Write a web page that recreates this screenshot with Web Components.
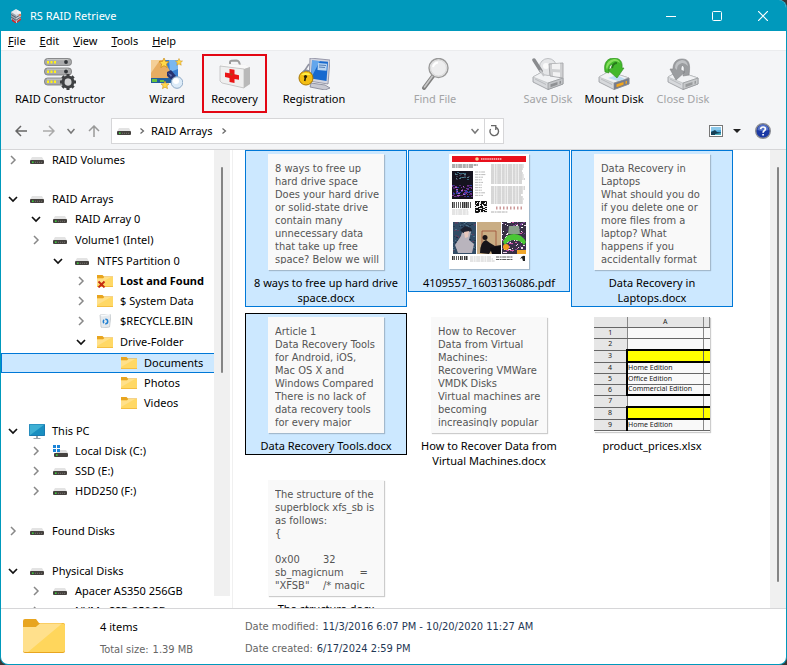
<!DOCTYPE html>
<html lang="en">
<head>
<meta charset="utf-8">
<title>RS RAID Retrieve</title>
<style>
  html, body { height: 100%; margin: 0; }
  body { background: #3a3634; font: 11px/16px "Noto Sans", "Open Sans", sans-serif; color: #000; }
</style>
</head>
<body>
<rs-window>
  <rs-titlebar slot="title">RS RAID Retrieve</rs-titlebar>
  <rs-menubar slot="menu" items="File,Edit,View,Tools,Help"></rs-menubar>
  <rs-toolbar slot="tools">
    <rs-tool icon="server" style="--w:104px">RAID Constructor</rs-tool>
    <rs-tool icon="wizard" style="--w:70px;--lead:20px">Wizard</rs-tool>
    <rs-tool icon="aid" style="--w:65px" marked>Recovery</rs-tool>
    <rs-tool icon="register" style="--w:94px">Registration</rs-tool>
    <rs-tool icon="find" style="--w:60px;--lead:44px" disabled>Find File</rs-tool>
    <rs-tool icon="save" style="--w:66px;--lead:50px" disabled>Save Disk</rs-tool>
    <rs-tool icon="mount" style="--w:66px">Mount Disk</rs-tool>
    <rs-tool icon="close" style="--w:72px" disabled>Close Disk</rs-tool>
  </rs-toolbar>
  <rs-addressbar slot="tools">RAID Arrays</rs-addressbar>

  <rs-tree slot="side">
    <rs-node level="0" icon="drive" state="closed">RAID Volumes</rs-node>
    <rs-node level="0" icon="drive" state="open" style="--lead:19px">RAID Arrays</rs-node>
    <rs-node level="1" icon="drive" state="open">RAID Array 0</rs-node>
    <rs-node level="1" icon="drive" state="closed" tall>Volume1 (Intel)</rs-node>
    <rs-node level="2" icon="drive" state="open">NTFS Partition 0</rs-node>
    <rs-node level="3" icon="lost" state="closed" bold>Lost and Found</rs-node>
    <rs-node level="3" icon="folder" state="closed">$ System Data</rs-node>
    <rs-node level="3" icon="bin" state="closed">$RECYCLE.BIN</rs-node>
    <rs-node level="3" icon="folder" state="open" tall>Drive-Folder</rs-node>
    <rs-node level="4" icon="folder" selected>Documents</rs-node>
    <rs-node level="4" icon="folder">Photos</rs-node>
    <rs-node level="4" icon="folder">Videos</rs-node>
    <rs-node level="0" icon="pc" state="open" style="--lead:8px">This PC</rs-node>
    <rs-node level="1" icon="system" state="closed">Local Disk (C:)</rs-node>
    <rs-node level="1" icon="drive" state="closed">SSD (E:)</rs-node>
    <rs-node level="1" icon="drive" state="closed">HDD250 (F:)</rs-node>
    <rs-node level="0" icon="drive" state="closed" style="--lead:20px">Found Disks</rs-node>
    <rs-node level="0" icon="drive" state="open" style="--lead:20px">Physical Disks</rs-node>
    <rs-node level="1" icon="drive" state="closed">Apacer AS350 256GB</rs-node>
    <rs-node level="1" icon="drive" state="closed">NVMe SSD 250GB</rs-node>
  </rs-tree>

  <rs-files slot="main">
    <rs-file selected name="8 ways to free up hard drive space.docx"><rs-page>8 ways to free up
hard drive space
Does your hard drive
or solid-state drive
contain many
unnecessary data
that take up free
space? Below we will</rs-page></rs-file>
    <rs-file selected name="4109557_1603136086.pdf"><rs-pdf></rs-pdf></rs-file>
    <rs-file selected name="Data Recovery in Laptops.docx"><rs-page>Data Recovery in
Laptops
What should you do
if you delete one or
more files from a
laptop? What
happens if you
accidentally format</rs-page></rs-file>
    <rs-file selected focused name="Data Recovery Tools.docx"><rs-page>Article 1
Data Recovery Tools
for Android, iOS,
Mac OS X and
Windows Compared
There is no lack of
data recovery tools
for every major</rs-page></rs-file>
    <rs-file name="How to Recover Data from Virtual Machines.docx"><rs-page>How to Recover
Data from Virtual
Machines:
Recovering VMWare
VMDK Disks
Virtual machines are
becoming
increasingly popular</rs-page></rs-file>
    <rs-file name="product_prices.xlsx"><rs-sheet></rs-sheet></rs-file>
    <rs-file name="The structure.docx"><rs-page>The structure of the
superblock xfs_sb is
as follows:
{

0x00	32
sb_magicnum     =
"XFSB"	/* magic</rs-page></rs-file>
  </rs-files>
  <rs-status slot="status"></rs-status>
</rs-window>

<script>
const FOLDER = '<path d="M0 1h5.5l1.5 1.6H16V13H0z" fill="#e8a51f"/><path d="M0 4.6h6L7.5 3H16v9.6H0z" fill="#ffd865"/><path d="M0 4.6h6L7.5 3H14L0 11z" fill="#ffe08a"/>';
const DRIVE = '<path d="M2 0h10l2 3.5H0z" fill="#e3e3e3"/><rect y="3" width="14" height="4" rx="1" fill="#44413e"/><rect x="2" y="4.5" width="1.6" height="1.4" fill="#3ce03c"/><path d="M5 5.3h7" stroke="#77736e" stroke-dasharray="1 1"/>';
const disk = (side, led) => `
  <path d="M1 19 11 13.500 31 20v6L16 31.500 1 24z" fill="#d7d9dc" stroke="#96989d" stroke-width=".8"/>
  <path d="M1 19 11 13.500 31 20 16 25z" fill="#f1f2f4" stroke="#b6b8bb" stroke-width=".6"/>
  <path d="M16 25 31 20v6l-15 5.500z" fill="${side}" stroke="#8c8e92" stroke-width=".6"/>
  <path d="m18.500 26.300 7-2.200v2.700l-7 2.400zM27.500 23.300l1.500-.5v2.800l-1.500.5z" fill="${led}"/>
  <path d="m3 21 11 5.500" stroke="#b9bbbf"/>`;
const STAR = (x, y, s) => `<path transform="translate(${x} ${y}) scale(${s})" d="M0-5 1.500-1.600 5-1.400 2.400 1 3.200 4.600 0 2.700-3.200 4.600-2.400 1-5-1.400-1.500-1.600z" fill="#ffd84a" stroke="#c98a12" stroke-width=".7"/>`;
const bar = y => `<rect x=".5" y="${y}" width="27" height="7" rx="3" fill="#a9aaab" stroke="#77797a" stroke-width=".8"/><path d="M3 ${y + 1.200}h21" stroke="#c9cacb"/><path d="M3 ${y + 3.700}h10" stroke="#fff21a" stroke-width="2.600" stroke-dasharray="2 1.500"/><circle cx="22" cy="${y + 3.500}" r="1.900" fill="#303438"/>`;

const ICONS = {
  logo: [14, 14, '<path d="M2 3 7 0l5 3v7l-5 4-5-4z" fill="#e6eaee"/><path d="M2 3 7 6v8l-5-4z" fill="#9aa6b1"/><path d="m7 6 5-3v7l-5 4z" fill="#c5ccd4"/><path d="M2 5.500 7 8.500l5-3M2 8l5 3.200L12 8" stroke="#59636e" fill="none"/><path d="m3 10 4 3v1.500L3 12z" fill="#d81f26"/><path d="m8 1 4 2v3L8 4z" fill="#f0f3f6"/><circle cx="11" cy="6" r="1.300" fill="#dc7d5c"/><path d="m8 12 4-3v2l-4 3z" fill="#c93431"/>'],
  min: [10, 10, '<path d="M0 5.500h10" stroke="#fff"/>'],
  max: [10, 10, '<rect x=".5" y=".5" width="9" height="9" rx="1" fill="none" stroke="#fff"/>'],
  x: [10, 10, '<path d="m0 0 10 10M10 0 0 10" stroke="#fff" stroke-width="1.200"/>'],
  server: [32, 32, bar(.5) + bar(10) + bar(20) +
    '<g transform="translate(24 24)"><circle r="5" fill="none" stroke="#3f4143" stroke-width="3"/><path d="M0-8v3M0 8V5M-8 0h3M8 0H5M-5.600-5.600l2 2M5.600 5.600l-2-2M-5.600 5.600l2-2M5.600-5.600l-2 2" stroke="#3f4143" stroke-width="3"/><circle r="3.400" fill="#d4d5d6"/></g>'],
  wizard: [32, 32, '<path d="M0 2h13l7 9v13H0z" fill="#e8ad62"/><path d="M0 2h9L0 15z" fill="#f4cf98"/><path d="M13 2h14v19l-6 5-4-5 2-8z" fill="#3a7fd0"/><path d="M18 2h9v9l-8 3z" fill="#79b7ef"/><path d="M0 20h21v5H0z" fill="#215f9d"/><path d="M1 21h5v3H1zM9 22h4v2H9z" fill="#69c43e"/><path d="m16 14 4-2 5 6-4 4-5-4z" fill="#26316f"/><path d="m17 15 4 2-1 2z" fill="#6574b4"/><circle cx="26" cy="24.500" r="5.800" fill="#dcebf8" stroke="#8faac6"/><circle cx="25" cy="23" r="3" fill="#fff"/>' + STAR(13, 5, 1) + STAR(28, 4, .7) + STAR(14, 27, .8)],
  aid: [32, 32, '<path d="M11 6V4q0-1 1.500-1.200l5-.3Q19 2.500 20 4l1 3" fill="none" stroke="#9c9c9c" stroke-width="2"/><path d="m1 8 3-2 23 1 4 2v17l-6 4-20-5-4-2z" fill="#dedede"/><path d="m1 8 3-2 23 1 4 2-6 2z" fill="#f9f9f9"/><path d="m1 8 24 3v19L3 25 1 23z" fill="#efefef" stroke="#b8b8b8" stroke-width=".7"/><path d="m25 11 6-2v17l-6 4z" fill="#b9b9b9"/><path d="m10.500 11 5 .8v4.400l4.500 1v4.600l-4.500-.9V25l-5-1v-4L6 19v-4.500l4.500.7z" fill="#ea1515"/><path d="m11 15 3 1-2 2z" fill="#a84518"/>'],
  register: [32, 32, '<path d="m13 25 14 2 5 3-5 2-15-3z" fill="#c8c9d2" stroke="#7e8092" stroke-width=".8"/><path d="m12 0 20 2-2 24-19-3z" fill="#d3d5df" stroke="#85879a" stroke-width=".8"/><path d="m14 2.500 16 1.300L28.500 23 13 20.500z" fill="#1769cf"/><path d="m14 2.500 8 .6-8 15z" fill="#63a6ec"/><path d="m20 5 9 .7-.5 7-9-.8z" fill="#b9d5f1"/><path d="m21 7 7 .5M21 9l6 .5" stroke="#557fb8"/><path d="m11 6-6 9" stroke="#8f92a1" stroke-width="1.500"/><circle cx="8" cy="20" r="7" fill="#f4be12" stroke="#a67604"/><path d="M3 17a6 5 0 0 1 10 0z" fill="#ffee45"/><path d="M5 14q2-3 6-1" fill="none" stroke="#868995" stroke-width="1.500"/><circle cx="7.500" cy="18.500" r="1.600" fill="#292209"/><path d="m7.500 19-.8 4" stroke="#292209" stroke-width="1.600"/>'],
  find: [32, 32, '<path d="m14 18-9 12" stroke="#818181" stroke-width="4" stroke-linecap="round"/><path d="m13.500 18-8 11" stroke="#c9c9c9" stroke-width="1.600" stroke-linecap="round"/><circle cx="19.500" cy="10" r="9.500" fill="#ededee" stroke="#999" stroke-width="1.400"/><circle cx="19.500" cy="10" r="8" fill="none" stroke="#d8d8d8"/><path d="M14 9q1-4 5-4.500" stroke="#fff" stroke-width="2" fill="none"/>'],
  save: [32, 32, disk('#c3c5c8', '#8f9194') + '<circle cx="16" cy="9" r="8.500" fill="#e5e6e8" stroke="#bdbfc2"/><circle cx="14" cy="8" r="3" fill="#fafafa"/><path d="m2 2 7 11" stroke="#898b8e" stroke-width="3.500" stroke-linecap="round"/><path d="m8 12 4 6" stroke="#c4c5c8" stroke-width="2"/><path d="m17 6 14-1v15l-13-2z" fill="#cfd0d2" stroke="#aaabae"/><path d="m20 6 8-.5v6l-8-.5zM21 14l7 .5V19l-7-1z" fill="#f2f2f3"/>'],
  mount: [32, 32, disk('#777c8c', '#f2a51c') + '<path d="m10 20 10 3 7-2-8-4z" fill="#bddcf4"/><path d="M7 14C5 4 10 0 16 0s9 4 8 10h2l-7 10-9-8 4-2c1-3 0-4-1-3-2 1-2 5-2 8z" fill="#43b82c" stroke="#2f8c1e" stroke-width=".6"/><path d="M8 9q1-7 8-8 5 0 6 4-5-4-9 0-3 2-4 7z" fill="#86df5d"/><path d="M14 10q1-5 5-5" stroke="#267b1a" fill="none" stroke-width="2"/>'],
  close: [32, 32, disk('#c6c8ca', '#999b9d') + '<path d="M22 17C24 4 21 1 15 1S6 5 6 11H3l6 11 9-8-4-2c0-4 1-5 2-4 2 1 1 6 0 10z" fill="#9b9da0" stroke="#838588" stroke-width=".6"/><path d="M8 10q0-7 7-8 5 0 6 6-5-5-8-2-3 1-3 6z" fill="#bfc1c4"/>'],
  back: [12, 12, '<path d="M12 6H1M6 1 1 6l5 5" fill="none" stroke="#666" stroke-width="1.500"/>'],
  fwd: [12, 12, '<path d="M0 6h11M6 1l5 5-5 5" fill="none" stroke="#aaa" stroke-width="1.500"/>'],
  up: [12, 12, '<path d="M6 12V1M1 6l5-5 5 5" fill="none" stroke="#999" stroke-width="1.500"/>'],
  down: [8, 8, '<path d="m.5 2 3.500 4 3.500-4" fill="none" stroke="#777" stroke-width="1.500"/>'],
  next: [8, 8, '<path d="m2.500 1.500 3 2.500-3 2.500" fill="none" stroke="#666" stroke-width="1.200"/>'],
  reload: [12, 14, '<path d="M7.800 3.300A4.300 4.300 0 1 1 2.600 5" fill="none" stroke="#666" stroke-width="1.400"/><path d="M3 1.700h4.800V6" fill="none" stroke="#666" stroke-width="1.300"/>'],
  photo: [14, 12, '<rect x=".5" y=".5" width="13" height="11" fill="#fff" stroke="#777"/><rect x="2" y="2" width="10" height="8" fill="#4aa6d8"/><path d="M2 2h10v3L2 6z" fill="#8bc8ea"/><path d="m2 7 4-2 2 2 4 .5V10H2z" fill="#153f56"/><path d="m6 9 6-1v2H6z" fill="#4bb0c0"/>'],
  caret: [8, 4, '<path d="M0 0h8L4 4z" fill="#222"/>'],
  help: [16, 16, '<circle cx="8" cy="8" r="7.300" fill="#1c3aa5" stroke="#8a8c92" stroke-width="1.400"/><path d="M2.500 7a5.500 5.500 0 0 1 11 0q-5 2-11 0z" fill="#5572c8"/><path d="M5.600 6.200Q5.800 4 8.100 4t2.300 2c0 1.600-2.300 1.700-2.300 3.700M8.100 11v1.600" stroke="#fff" stroke-width="1.700" fill="none"/>'],
  drive: [14, 7, DRIVE],
  folder: [16, 14, FOLDER],
  lost: [16, 14, FOLDER + '<path d="m1.500 7.500 6 6m0-6-6 6" stroke="#c42b12" stroke-width="1.800"/>'],
  bin: [12, 14, '<path d="M1 1 10 0l2 1-1.500 12-7 1L2 13z" fill="#e4e9ed" stroke="#b7bdc2" stroke-width=".7"/><path d="M1 1 10 0l2 1-9 1.500z" fill="#f8fafb"/><circle cx="6.500" cy="7.500" r="2.200" fill="none" stroke="#1f7fd1" stroke-width="1.500" stroke-dasharray="3.400 1.200"/>'],
  pc: [16, 15, '<rect width="16" height="12" rx=".8" fill="#1c6fa8"/><path d="M.6.6h14.800v10.800H.6z" fill="#1a8fc0"/><path d="M.6.6h14.800L.6 11.400z" fill="#3fb0d4"/><path d="M7 12h2v2h2.500v1h-7v-1H7z" fill="#9aa3aa"/>'],
  system: [15, 12, '<path d="M0 0h3v3H0zM4 0h3v3H4zM0 4h3v3H0zM4 4h3v3H4z" fill="#1b84d8"/><path d="M7 5h6l2 3H3l1-1h3z" fill="#dedede"/><rect x="1" y="8" width="14" height="4" rx="1" fill="#44413e"/><path d="M3 10h1.600" stroke="#3ce03c" stroke-width="1.400"/>'],
  open: [10, 8, '<path d="m1 2 4 4 4-4" fill="none" stroke="#111" stroke-width="1.700"/>'],
  closed: [8, 10, '<path d="m2 1 4 4-4 4" fill="none" stroke="#888" stroke-width="1.500"/>'],
  bigfolder: [42, 34, '<path d="M0 2q0-2 2-2h11l3 4h24q2 0 2 2v26q0 2-2 2H2q-2 0-2-2z" fill="#e8a51f"/><path d="M0 8h13l4-3.500h23q2 0 2 2v24.500q0 2-2 2H2q-2 0-2-2z" fill="#ffd65c"/><path d="M0 8h13l4-3.500h22L5 33H2q-2 0-2-2z" fill="#ffe08c"/>'],
};

const BUTTON = 'button{font:inherit;color:inherit;background:none;border:0;margin:0;padding:0;text-align:inherit;outline:0}';

class RsElement extends HTMLElement {
  connectedCallback() {
    if (this.shadowRoot) return;
    const t = document.createElement('template');
    t.innerHTML = `<style>*{box-sizing:border-box}${this.css()}</style>${this.html()}`;
    this.attachShadow({ mode: 'open' }).append(t.content.cloneNode(true));
  }
  css() { return ':host{display:block}'; }
  html() { return '<slot></slot>'; }
}
const define = (name, css, html = '<slot></slot>') => customElements.define(name, class extends RsElement {
  css() { return css; }
  html() { return typeof html === 'function' ? html(this) : html; }
});

define('rs-icon', ':host{display:block;flex:none}svg{display:block}', el => {
  const [w, h, body] = ICONS[el.getAttribute('name')];
  return `<svg width="${w}" height="${h}" viewBox="0 0 ${w} ${h}" aria-hidden="true">${body}</svg>`;
});

define('rs-window', `
  :host{display:flex;flex-direction:column;height:100vh;box-sizing:border-box;border:solid #0099bc;border-width:0 1px 1px;border-radius:0 8px 8px 8px;overflow:hidden;background:#fff}
  header{flex:none;display:block}
  .tools{background:#f4f5f7;border-top:1px solid #ebecee;border-bottom:1px solid #d6d6d8;padding:3px 7px 5px}
  .body{flex:1;min-height:0;display:grid;grid-template-columns:231px minmax(0,1fr)}
  .body>*{min-width:0;min-height:0;overflow:hidden}
  main{border-left:1px solid #f0f0f0}
  aside{display:flex}main{display:flex}
  ::slotted([slot=side]),::slotted([slot=main]){flex:1;min-width:0}
  footer{flex:none;border-top:1px solid #d6d6d8}`,
  `<header><slot name="title"></slot><slot name="menu"></slot></header>
   <div class="tools"><slot name="tools"></slot></div>
   <div class="body"><aside><slot name="side"></slot></aside><main><slot name="main"></slot></main></div>
   <footer><slot name="status"></slot></footer>`);

define('rs-titlebar', BUTTON + `
  :host{display:flex;align-items:center;height:31px;background:#0099bc;color:#fff;padding-left:8px}
  h1{font:inherit;margin:0 auto 0 7px}
  button{width:46px;height:31px;display:grid;place-items:center}`,
  `<rs-icon name="logo"></rs-icon><h1><slot></slot></h1>
   <button aria-label="Minimize"><rs-icon name="min"></rs-icon></button>
   <button aria-label="Maximize"><rs-icon name="max"></rs-icon></button>
   <button aria-label="Close"><rs-icon name="x"></rs-icon></button>`);

define('rs-menubar', BUTTON + `
  :host{display:block}nav{display:flex;gap:14px;height:19px;align-items:center;padding:0 7px;background:#fff}`,
  el => `<nav>${el.getAttribute('items').split(',').map(s => `<button><u>${s[0]}</u>${s.slice(1)}</button>`).join('')}</nav>`);

define('rs-toolbar', ':host{display:flex;margin-bottom:5px}');

define('rs-tool', BUTTON + `
  :host{display:block;flex:none;width:var(--w);margin-left:var(--lead,0)}
  button{width:100%;height:59px;border:2px solid transparent;padding:2px 0;display:flex;flex-direction:column;align-items:center;gap:1px;white-space:nowrap}
  :host([marked]) button{border-color:#e30613}
  button:disabled{color:#a3a4a6}`,
  el => `<button ${el.hasAttribute('disabled') ? 'disabled' : ''}><rs-icon name="${el.getAttribute('icon')}"></rs-icon><span><slot></slot></span></button>`);

define('rs-addressbar', BUTTON + `
  :host{display:flex;align-items:center;height:26px}
  button{flex:none;display:grid;place-items:center}
  .go{width:30px;height:26px}.back{width:26px}.small{width:14px}.up{width:31px}
  .box{flex:0 1 393px;display:flex;align-items:center;height:26px;border:1px solid #d6d6d8;background:#fff;margin-left:2px}
  .box>rs-icon{margin:0 5px}
  .box>rs-icon+rs-icon{margin:0 2px}
  .crumb{margin:0 3px}
  .list{margin-left:auto;width:19px;height:24px}
  .reload{width:19px;height:24px;border-left:1px solid #d6d6d8}
  .view{margin-left:auto}.view,.help{height:24px}
  .caret{width:28px;height:24px}
  .help{margin:0 8px 0 4px}`,
  `<button class="go back" aria-label="Back"><rs-icon name="back"></rs-icon></button>
   <button class="go" aria-label="Forward"><rs-icon name="fwd"></rs-icon></button>
   <button class="small" aria-label="Recent"><rs-icon name="down"></rs-icon></button>
   <button class="up" aria-label="Up"><rs-icon name="up"></rs-icon></button>
   <div class="box"><rs-icon name="drive"></rs-icon><rs-icon name="next"></rs-icon><button class="crumb"><slot></slot></button><rs-icon name="next"></rs-icon>
     <button class="list" aria-label="History"><rs-icon name="down"></rs-icon></button>
     <button class="reload" aria-label="Refresh"><rs-icon name="reload"></rs-icon></button></div>
   <button class="view" aria-label="View"><rs-icon name="photo"></rs-icon></button>
   <button class="caret" aria-label="View options"><rs-icon name="caret"></rs-icon></button>
   <button class="help" aria-label="Help"><rs-icon name="help"></rs-icon></button>`);

define('rs-scroll', `
  :host{display:flex;flex:none;width:16px;background:#f0f0f0;justify-content:center;align-items:flex-start;padding-top:17px;box-sizing:border-box}
  i{width:2px;background:#858585;height:var(--thumb);border-radius:1px}`, '<i></i>');

define('rs-tree', `
  :host{display:flex;overflow:hidden}
  .list{flex:1;min-width:0;height:100%;overflow:hidden}
  rs-scroll{margin:0 2px 12px 0;--thumb:48%}`,
  '<div class="list" role="tree"><slot></slot></div><rs-scroll></rs-scroll>');

define('rs-node', BUTTON + `
  :host{display:block;margin-top:var(--lead,0)}
  :host([level="1"]){--in:23px}:host([level="2"]){--in:45px}:host([level="3"]){--in:68px}:host([level="4"]){--in:92px}
  button{width:100%;height:20px;display:flex;align-items:center;padding-left:var(--in,0);border:1px solid transparent;white-space:nowrap}
  :host([tall]) button{height:22px}
  :host([bold]) button{font-weight:bold}
  :host([selected]) button{background:#cce8ff;border-color:#0078d7;border-right:0}
  .tw{width:26px;padding-right:4px;flex:none;display:grid;place-items:center}
  .ic{width:18px;margin-right:6px;flex:none;display:grid;place-items:center}`,
  el => `<button role="treeitem"><span class="tw">${el.hasAttribute('state') ? `<rs-icon name="${el.getAttribute('state')}"></rs-icon>` : ''}</span><span class="ic"><rs-icon name="${el.getAttribute('icon')}"></rs-icon></span><span><slot></slot></span></button>`);

define('rs-files', `
  :host{display:flex;overflow:hidden}
  .grid{flex:1;min-width:0;display:grid;grid-template-columns:repeat(auto-fill,162px);grid-auto-rows:157px;gap:6px 1px;align-items:start;align-content:start;padding-left:12px;overflow:hidden}
  rs-scroll{--thumb:94%}`,
  '<div class="grid"><slot></slot></div><rs-scroll></rs-scroll>');

define('rs-file', BUTTON + `
  :host{display:block}
  button{width:100%;display:flex;flex-direction:column;align-items:center;gap:5px;border:1px solid transparent;padding:3px 4px 1px}
  :host([selected]) button{background:#cce8ff;border-color:#0078d7}
  :host([focused]) button{border-color:#000}
  .thumb{height:116px}
  .name{line-height:15px;text-align:center;overflow-wrap:anywhere}`,
  el => `<button><span class="thumb"><slot></slot></span><span class="name">${el.getAttribute('name')}</span></button>`);

define('rs-page', `
  :host{display:block;box-sizing:border-box;width:116px;height:116px;background:#f9f9f9;box-shadow:1px 1px 1px #0003;padding:8px 0 0 7px}
  div{height:102px;overflow:hidden;font:11px/13px "DejaVu Sans Condensed","DejaVu Sans",sans-serif;color:#555;white-space:pre;tab-size:48px}`,
  '<div><slot></slot></div>');

const rnd = (() => { let s = 7; return () => (s = (s * 16807) % 2147483647) / 2147483647; })();
const lines = (x, y, w, n, step, c = '#999') => Array.from({ length: n }, (_, i) =>
  `<path d="M${x} ${y + i * step}h${w - Math.round(rnd() * 5)}" stroke="${c}" stroke-width=".8" stroke-dasharray="3 .6 2 .6 4 .6"/>`).join('');
const specks = (x, y, w, h, n, cs) => Array.from({ length: n }, () =>
  `<rect x="${x + Math.floor(rnd() * (w - 1))}" y="${y + Math.floor(rnd() * (h - 1))}" width="${1 + Math.round(rnd())}" height="1" fill="${cs[Math.floor(rnd() * cs.length)]}"/>`).join('');
const barcode = (x, y, w, h) => Array.from({ length: Math.floor(w / 2) }, (_, i) =>
  `<rect x="${x + i * 2}" y="${y}" width="${rnd() > .5 ? 1.500 : .8}" height="${h}" fill="#333"/>`).join('');

define('rs-pdf', ':host{display:block;width:80px;height:115px;background:#fff;box-shadow:1px 1px 1px #0003}svg{display:block}', () => `
  <svg width="80" height="115" viewBox="0 0 80 115" aria-hidden="true">
    <rect x="3" y="2" width="74" height="6" fill="#e8101c"/><circle cx="28" cy="5" r="1.800" fill="#f3d79a"/><path d="M32 5h21" stroke="#f9c6c8" stroke-width="1.500" stroke-dasharray="1.500 .6"/>
    ${lines(3, 11, 26, 2, 2, '#333')}
    <rect x="3" y="17" width="21" height="28" fill="#15131f"/>${specks(6, 18, 15, 9, 28, ['#34637a', '#5b7d86', '#3a3549'])}${specks(3, 31, 21, 13, 90, ['#71318c', '#2b3fa8', '#b263c9', '#4a2270'])}
    ${lines(26, 18, 11, 10, 2.600, '#aaa')}
    ${lines(42, 11, 35, 10, 2)}${lines(42, 33, 35, 9, 2)}
    <path d="M47 54h26" stroke="#c99" stroke-width="3" stroke-dasharray="1.500 2"/>${lines(42, 58, 20, 1, 2)}
    ${barcode(3, 48, 21, 6)}${lines(3, 56, 18, 3, 2, '#bbb')}
    <rect x="26" y="47" width="12" height="12" fill="#eee"/>${specks(26, 47, 12, 12, 75, ['#111'])}<path d="M26.500 47.500h3v3h-3zM34.500 47.500h3v3h-3zM26.500 55.500h3v3h-3z" fill="none" stroke="#111"/>
    <rect x="4" y="68" width="23" height="32" fill="#324c66"/>${specks(4, 68, 23, 32, 100, ['#1d2f46', '#4d6f86', '#5b3f5f', '#243b50'])}<path d="M12 82q1-7 7-8l3 4-2 8 5 4-2 9H9l-3-8z" fill="#b9b4bd"/><path d="m11 76 5-4 6 2 1 3-9 2z" fill="#1d2231"/><path d="m15 78 5-1-1 6-3 1z" fill="#e8c8bd"/>
    <rect x="28" y="68" width="24" height="32" fill="#c9ad84"/><path d="M33 77h14v17H33z" fill="none" stroke="#a04b35" stroke-width=".8"/><path d="M31 99q0-11 6-13l4 3 5 3 6-1v2l-9 2-3 5z" fill="#171419"/><circle cx="36" cy="83.500" r="2.500" fill="#1a1417"/><path d="m41 94 11-2v8h-9z" fill="#0e0d12"/>
    <rect x="53" y="68" width="24" height="32" fill="#383045"/>${specks(53, 68, 24, 32, 150, ['#d65ea8', '#f1d8ea', '#7e4899', '#ffffff', '#4a2e65'])}<path d="M54 88q3-8 11-8t12 8l-2 3q-4-5-10-5t-9 5z" fill="#4ac735"/><path d="M60 72h10l1 8H59z" fill="#8aa08a"/><circle cx="57" cy="93" r="3" fill="#f29c1f"/><rect x="68" y="96" width="9" height="4" fill="#f0a62a"/>
    ${barcode(3, 102, 16, 4)}${lines(21, 103, 25, 3, 2, '#bbb')}${lines(47, 103, 21, 2, 2.500, '#333')}<path d="M71 105q2-4 5-3v5h-2l-1-3z" fill="#222"/>
  </svg>`);

const cells = [['', ''], ['', ''], ['', 'y'], ['Home Edition', 'b'], ['Office Edition', 'b'], ['Commercial Edition', 'b e'], ['', ''], ['', 'y'], ['Home Edition', 'b']];
define('rs-sheet', `
  :host{display:block;width:116px;height:115px;overflow:hidden;background:#f9f9f9;box-shadow:1px 1px 1px #0003}
  table{width:100%;table-layout:fixed;border-collapse:collapse;font:7px/8px "Noto Sans",sans-serif;color:#222}
  col:first-child{width:33px}col:last-child{width:6px}
  tr{height:12px}thead tr{height:10px}
  th,td{padding:0;border:1px solid #666;border-right-color:#888;font-weight:normal;white-space:nowrap;text-align:left}
  th{background:#e6e6e6;text-align:center;border-left:0}thead th{border-top:0}
  td:last-child{border-right:0}
  .y td{background:#ff0;border-top:2px solid #000;border-bottom:2px solid #000;border-right:0}
  .y td:nth-child(2),.b td:nth-child(2){border-left:2px solid #000}
  .e td{border-bottom:2px solid #000}
  tbody tr:first-child,.b{height:11px}`,
  `<table><colgroup><col><col><col></colgroup><thead><tr><th></th><th>A</th><th></th></tr></thead><tbody>${cells.map(([t, c], i) => `<tr class="${c}"><th>${i + 1}</th><td>${t}</td><td></td></tr>`).join('')}</tbody></table>`);

define('rs-status', `
  :host{display:grid;grid-template-columns:77px 145px minmax(0,1fr);align-items:start;height:55px;padding:7px 0 0 22px;box-sizing:border-box;font:11px/22px "DejaVu Sans Condensed","DejaVu Sans",sans-serif;color:#666}
  p{margin:0;white-space:nowrap}b{font:11px/22px "Noto Sans",sans-serif;color:#000}
  rs-icon{margin-top:3px}span{color:#1f3855;margin-left:4px}.s{color:inherit}`,
  `<rs-icon name="bigfolder"></rs-icon>
   <div><p><b>4 items</b></p><p>Total size:<span class="s">1.39 MB</span></p></div>
   <div><p>Date modified:<span>11/3/2016 6:07 PM - 10/20/2020 11:27 AM</span></p><p>Date created:<span>6/17/2024 2:59 PM</span></p></div>`);
</script>
</body>
</html>
